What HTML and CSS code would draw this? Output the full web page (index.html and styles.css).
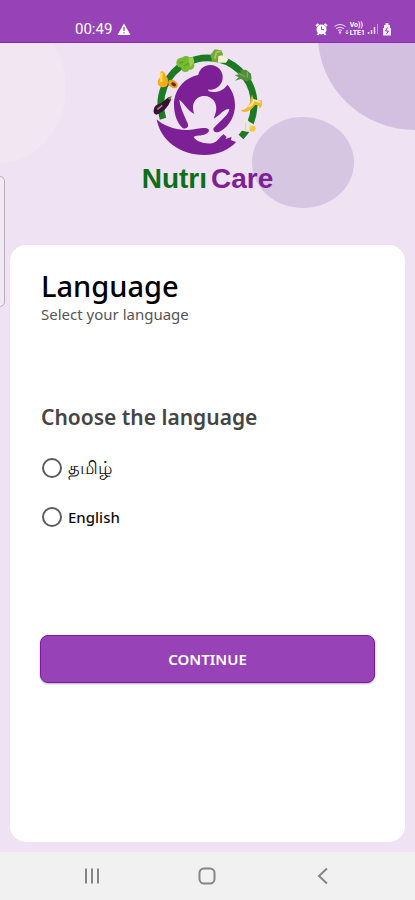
FILE: index.html
```html
<!DOCTYPE html>
<html lang="en">
<head>
    <meta charset="UTF-8">
    <meta name="viewport" content="width=device-width, initial-scale=1">
    <title>NutriCare - Language</title>
    <link rel="stylesheet" href="styles.css">
</head>
<body>
    <div class="status-bar">
        <div class="status-left">
            <span class="clock">00:49</span>
            <svg width="14" height="12" viewBox="0 0 14 12"><path d="M7 0.500L13.500 12H0.500Z" fill="#fff"/><path d="M7 4v4M7 9.200v1.300" stroke="#9842b8" stroke-width="1.300"/></svg>
        </div>
        <div class="status-right">
            <!-- alarm -->
            <svg width="13" height="13" viewBox="0 0 13 13"><path d="M1 3L3.500 1M12 3L9.500 1M2.500 12l1.500-2M10.500 12L9 10" stroke="#fff" stroke-width="2"/><circle cx="6.500" cy="6.500" r="5" fill="#fff"/><path d="M6.500 3.500v3.200h2.500" fill="none" stroke="#9842b8"/></svg>
            <!-- wifi -->
            <svg class="wifi" width="15" height="13" viewBox="0 0 15 13" fill="none" stroke="#f3dff8"><path d="M.5 3.500Q6 -.5 11.500 3.500M2 5.500q4-2.600 8 0M4 7.500q2-1.200 4 0"/><path d="M5 9h2l-1 1.500z" fill="#fff"/><path d="M13 7v4M11.500 9.500L13 11l1.500-1.500"/></svg>
            <span class="volte"><span>Vo))</span><span>LTE1</span></span>
            <!-- signal -->
            <svg width="12" height="12" viewBox="0 0 12 12" stroke="#f3dff8"><path d="M1.500 9v2M4.500 7v4M7.500 4v7" stroke-width="1.500"/><path d="M10.500 1v10" opacity=".5"/></svg>
            <!-- battery -->
            <svg class="battery" width="10" height="13" viewBox="0 0 10 13"><path d="M3.500 0h3v2h1.500v3h1v7.500h-8V5h1V2h1.500z" fill="#fff" opacity=".9"/><path d="M5.500 4.500L3.500 8h3L4.500 11" fill="none" stroke="#9842b8"/></svg>
        </div>
    </div>

    <main class="screen">
        <span class="bubble bubble-left"></span>
        <span class="bubble bubble-corner"></span>
        <span class="bubble bubble-small"></span>
        <span class="edge-handle"></span>

        <header class="brand">
            <svg class="logo" viewBox="39 18 360 336" role="img" aria-label="NutriCare logo">
                <!-- vine -->
                <path d="M84 236A140 140 0 1 1 318 291" fill="none" stroke="#1d7a24" stroke-width="20"/>
                <!-- mother and child -->
                <g fill="#7d2096">
                    <circle cx="226" cy="112" r="37"/>
                    <path d="M194 104C150 110 117 148 117 194C117 225 128 250 142 263C152 270 163 262 158 250C149 228 136 205 133 179C145 186 157 212 178 222C166 190 184 168 208 168C233 168 250 192 242 218L236 236C256 226 264 207 283 207C281 225 257 241 236 264C232 275 245 281 256 274C286 256 300 226 300 195C300 170 290 148 277 134C267 151 245 160 221 154L218 145Z"/>
                    <path d="M65 238C82 255 120 272 160 270C184 268 201 262 215 265C226 268 223 278 212 282C200 288 180 286 176 291C180 302 211 315 234 309C250 304 254 289 266 283L275 291L271 297L290 291L287 300L303 306C285 328 249 345 208 345C132 345 76 300 65 238Z"/>
                </g>
                <!-- broccoli -->
                <g fill="#78b934">
                    <circle cx="139" cy="68" r="15"/><circle cx="153" cy="62" r="14"/><circle cx="165" cy="76" r="13"/><circle cx="151" cy="84" r="12"/>
                    <path d="M160 55l14-5 4 16-12 16z" fill="#9bd057"/>
                    <path d="M133 69l12-3M147 78l14-8" stroke="#5ba02c" stroke-width="4"/>
                </g>
                <!-- leek -->
                <path d="M226 45L239 28L259 31L264 43L255 68L232 65Z" fill="#76a83b"/>
                <path d="M239 57L244 37L257 33" fill="none" stroke="#a9cb62" stroke-width="5"/>
                <path d="M250 48Q267 42 280 58L273 68L249 68Z" fill="#f3f1d3"/>
                <!-- cabbage -->
                <path d="M299 105L316 103L317 90L333 89L348 101L350 118L335 124L317 117L300 122L311 112Z" fill="#568d3c"/>
                <path d="M310 99L330 110M337 96v17" stroke="#8bb762" stroke-width="3"/>
                <!-- banana -->
                <path d="M317 211Q340 207 346 185L351 163L357 183L381 181Q383 197 374 207Q374 193 360 195Q344 218 325 216Z" fill="#f3b72a"/>
                <path d="M340 200Q354 195 356 180L377 187" fill="none" stroke="#ffe59a" stroke-width="6"/>
                <!-- garlic and egg -->
                <path d="M318 248Q330 250 335 238Q342 247 354 251L360 272Q345 280 318 271Z" fill="#ece9e2"/>
                <path d="M332 247v24M345 251v22" stroke="#d6d4ca" stroke-width="3"/>
                <circle cx="353" cy="266" r="9" fill="#f4c83b"/>
                <!-- papaya -->
                <path d="M76 95Q87 89 92 107Q104 118 96 137Q81 148 69 134Q66 119 76 111Z" fill="#f4ad18"/>
                <path d="M79 98v28" stroke="#ffdb5e" stroke-width="7"/>
                <ellipse cx="114" cy="132" rx="16" ry="11" transform="rotate(35 114 132)" fill="#f39b25"/>
                <ellipse cx="116" cy="133" rx="8" ry="5" transform="rotate(35 116 133)" fill="#523019"/>
                <!-- aubergine -->
                <path d="M56 210Q58 194 78 190L101 171L109 178L100 196Q84 219 64 224Q54 221 56 210Z" fill="#36142f"/>
                <path d="M98 174L110 167L106 182Z" fill="#6b7641"/>
                <path d="M67 208L82 196" stroke="#ab829f" stroke-width="5"/>
            </svg>
            <div class="wordmark"><span class="nutri">Nutrı</span><span class="care">Care</span></div>
        </header>

        <form class="card">
            <h1>Language</h1>
            <p class="subtitle">Select your language</p>

            <fieldset>
                <legend>Choose the language</legend>
                <label class="option"><input type="radio" name="language" value="ta"><span class="tamil" lang="ta">தமிழ்</span></label>
                <label class="option"><input type="radio" name="language" value="en"><span>English</span></label>
            </fieldset>

            <button type="button" class="continue">CONTINUE</button>
        </form>
    </main>

    <nav class="nav-bar">
        <button type="button" aria-label="Recent apps">
            <svg width="18" height="18" viewBox="0 0 18 18" stroke="#858585" stroke-width="2"><path d="M3 1.500v15M9 1.500v15M15 1.500v15"/></svg>
        </button>
        <button type="button" aria-label="Home">
            <svg width="18" height="18" viewBox="0 0 18 18" fill="none" stroke="#858585" stroke-width="2"><rect x="1.500" y="1.500" width="15" height="15" rx="4.500"/></svg>
        </button>
        <button type="button" aria-label="Back">
            <svg width="18" height="18" viewBox="0 0 18 18" fill="none" stroke="#858585" stroke-width="2"><path d="M13 1.500L5 9l8 7.500"/></svg>
        </button>
    </nav>
</body>
</html>
```
FILE: styles.css
```css
* {
    box-sizing: border-box;
}
body {
    display: flex;
    flex-direction: column;
    min-height: 100vh;
    margin: 0;
    background-color: #efe2f3;
    font-family: "Noto Sans", "Open Sans", sans-serif;
}
button {
    border: none;
    cursor: pointer;
}
.status-bar {
    display: flex;
    justify-content: space-between;
    align-items: flex-end;
    height: 43px;
    padding: 0 23px 5px 75px;
    background-color: #9842b8;
    border-bottom: 1px solid #8a2bad;
    color: #fff;
}
.status-left,
.status-right {
    display: flex;
    align-items: center;
    height: 16px;
}
.status-left {
    gap: 5px;
}
.clock {
    font: 15px/16px Roboto, sans-serif;
}
.wifi {
    margin-left: 6px;
}
.volte {
    display: flex;
    flex-direction: column;
    margin: 0 2px 0 1px;
    font: bold 7px/8px Roboto, sans-serif;
}
.battery {
    margin-left: 3px;
}
.screen {
    position: relative;
    flex: 1;
    display: flex;
    flex-direction: column;
    padding: 0 10px 10px;
    overflow: hidden;
}
.bubble {
    position: absolute;
    border-radius: 50%;
}
.bubble-left {
    top: -30px;
    left: -70px;
    width: 136px;
    height: 150px;
    background-color: #f2e6f3;
}
.bubble-corner {
    top: -102px;
    right: -97px;
    width: 194px;
    height: 189px;
    background-color: #d3c0e1;
}
.bubble-small {
    top: 74px;
    right: 61px;
    width: 102px;
    height: 91px;
    background-color: #d6c6e1;
}
.edge-handle {
    position: absolute;
    top: 133px;
    left: -10px;
    width: 15px;
    height: 131px;
    border: 1px solid #b9afbd;
    border-radius: 5px;
    background-color: #f2e9f5;
}
.brand {
    position: relative;
    display: flex;
    flex-direction: column;
    align-items: center;
    height: 202px;
    padding-top: 3px;
}
.logo {
    width: 120px;
    height: 112px;
}
.wordmark {
    margin-top: 4px;
    font: bold 28px/34px "Liberation Sans", sans-serif;
}
.nutri {
    margin-right: 4px;
    color: #0b6f17;
}
.care {
    color: #7d2096;
}
.card {
    position: relative;
    flex: 1;
    padding: 22px 30px;
    border-radius: 16px;
    background-color: #fff;
}
h1 {
    margin: 0;
    padding-left: 1px;
    color: #000;
    font-size: 29px;
    font-weight: 500;
    line-height: 38px;
}
.subtitle {
    margin: 0;
    padding-left: 1px;
    color: #555;
    font-size: 15px;
    line-height: 18px;
}
fieldset {
    margin: 80px 0 0;
    padding: 0 0 0 1px;
    border: none;
}
legend {
    margin-bottom: 25px;
    padding: 0;
    color: #454545;
    font-size: 21px;
    font-weight: 600;
    line-height: 28px;
}
.option {
    display: flex;
    align-items: center;
    gap: 6px;
    height: 24px;
    margin-bottom: 25px;
    color: #111;
    font-size: 15px;
    font-weight: 500;
}
.tamil {
    font-size: 18px;
}
.option input {
    appearance: none;
    width: 20px;
    height: 20px;
    margin: 0 0 0 1px;
    border: 2px solid #5c5c5c;
    border-radius: 50%;
}
.option input:checked {
    background: radial-gradient(#9842b8 45%, transparent 50%);
}
.continue {
    width: 100%;
    height: 48px;
    margin-top: 81px;
    border: 1px solid #8315a5;
    border-radius: 8px;
    background-color: #9842b8;
    box-shadow: 0 1px 2px rgba(0,0,0,0.3);
    color: #fff;
    font: 600 15px "Noto Sans", sans-serif;
}
.nav-bar {
    display: flex;
    justify-content: space-around;
    height: 48px;
    padding: 0 34px;
    background-color: #f1f1f1;
}
.nav-bar button {
    display: flex;
    align-items: center;
    padding: 0 20px;
    background: none;
}
```
